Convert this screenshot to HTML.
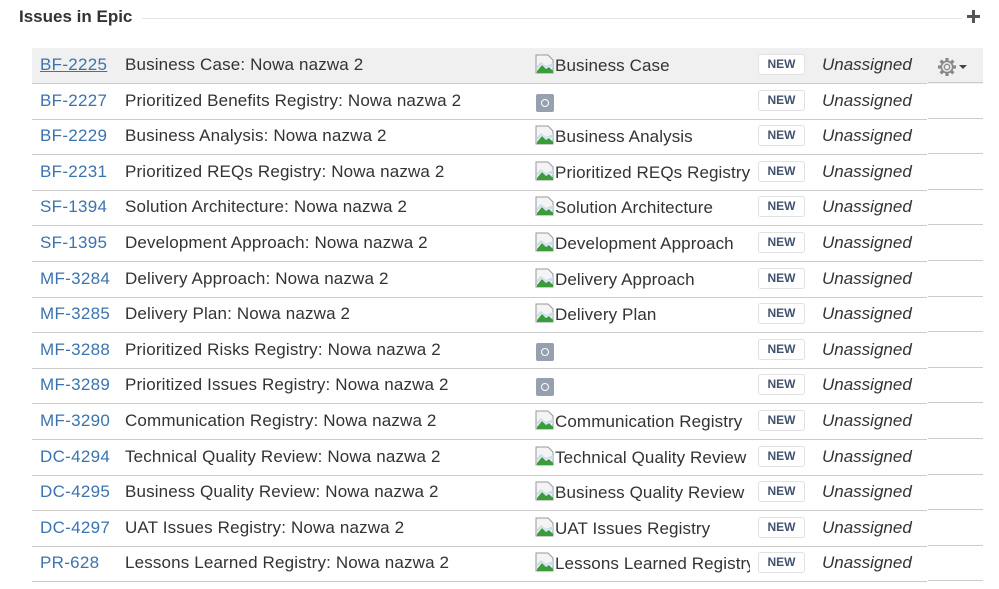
<!DOCTYPE html>
<html><head><meta charset="utf-8"><style>
*{margin:0;padding:0;box-sizing:border-box}
body{width:999px;height:589px;background:#fff;font-family:"Liberation Sans",Arial,sans-serif;color:#333;position:relative;overflow:hidden}
.title{position:absolute;left:19px;top:7px;font-size:17px;font-weight:bold;color:#333}
.hline{position:absolute;left:142px;top:18px;width:820px;height:1px;background:#e5e5e5}
.plus{position:absolute;left:967px;top:10px;width:13px;height:13px}
.plus:before{content:"";position:absolute;left:5px;top:0;width:3px;height:13px;background:#555}
.plus:after{content:"";position:absolute;left:0;top:5px;width:13px;height:3px;background:#555}
.row{position:absolute;left:32px;width:951px;height:36px;font-size:17px;line-height:34px}
.hl{background:#f0f0f0}
.sep{position:absolute;left:0;bottom:0;width:895px;height:1px;background:#ccc}
.sep2{position:absolute;left:896px;bottom:1px;width:55px;height:1px;background:#ccc}
.key{position:absolute;left:8px;top:0;color:#3b73af;letter-spacing:0.3px}
.sum{position:absolute;left:93px;top:0;white-space:nowrap;letter-spacing:0.15px}
.typ{position:absolute;left:503px;width:215px;overflow:hidden;white-space:nowrap;top:1px;letter-spacing:0.1px}
.typ svg{vertical-align:-3px}
.ic{position:absolute;left:504px;top:10px;width:18px;height:18px;background:#97a0af;border-radius:2px}
.ic:after{content:"";position:absolute;left:5px;top:5px;width:8px;height:8px;border:1.6px solid #fff;border-radius:50%;box-sizing:border-box}
.new{position:absolute;left:726px;top:6px;width:47px;height:21px;border:1px solid #dfe1e6;border-radius:3px;background:#fff;font-size:12px;font-weight:bold;color:#42526e;text-align:center;line-height:19px}
.un{position:absolute;left:790px;top:0;font-style:italic;color:#333}
.gear{position:absolute;left:905px;top:7px}
</style></head><body>
<div class="title">Issues in Epic</div>
<div class="hline"></div>
<div class="plus"></div>
<svg width="0" height="0" style="position:absolute"><defs><symbol id="bi" viewBox="0 0 20 20"><path d="M1 1h12l5 5v13H1z" fill="#f4f4f4" stroke="#999"/><path d="M2 12l4-4 5 4 7-3v5l-4-2-3 2-4-4-5 5z" fill="#c8dcef"/><path d="M2 17l5-6 4 4 3-2 4 4v2H2z" fill="#3a9c3a"/></symbol></defs></svg>

<div class="row hl" style="top:48px"><span class="key" style="text-decoration:underline">BF-2225</span><span class="sum">Business Case: Nowa nazwa 2</span><span class="typ"><svg width="20" height="20"><use href="#bi"/></svg>Business Case</span><span class="new">NEW</span><span class="un">Unassigned</span><span class="gear"><svg width="34" height="20" viewBox="0 0 34 20"><g stroke="#888" stroke-width="3.2"><path d="M10 1v18M1 10h18M3.6 3.6l12.8 12.8M16.4 3.6L3.6 16.4"/></g><circle cx="10" cy="10" r="6.5" fill="#888"/><circle cx="10" cy="10" r="5" fill="#e0e0e0"/><circle cx="10" cy="10" r="2.6" fill="#f0f0f0" stroke="#888" stroke-width="1.2"/><path d="M22 8h8l-4 4z" fill="#444"/></svg></span><div class="sep"></div><div class="sep2"></div></div>

<div class="row" style="top:84px"><span class="key">BF-2227</span><span class="sum">Prioritized Benefits Registry: Nowa nazwa 2</span><span class="ic"></span><span class="new">NEW</span><span class="un">Unassigned</span><div class="sep"></div><div class="sep2"></div></div>

<div class="row" style="top:119px"><span class="key">BF-2229</span><span class="sum">Business Analysis: Nowa nazwa 2</span><span class="typ"><svg width="20" height="20"><use href="#bi"/></svg>Business Analysis</span><span class="new">NEW</span><span class="un">Unassigned</span><div class="sep"></div><div class="sep2"></div></div>

<div class="row" style="top:155px"><span class="key">BF-2231</span><span class="sum">Prioritized REQs Registry: Nowa nazwa 2</span><span class="typ"><svg width="20" height="20"><use href="#bi"/></svg>Prioritized REQs Registry</span><span class="new">NEW</span><span class="un">Unassigned</span><div class="sep"></div><div class="sep2"></div></div>

<div class="row" style="top:190px"><span class="key">SF-1394</span><span class="sum">Solution Architecture: Nowa nazwa 2</span><span class="typ"><svg width="20" height="20"><use href="#bi"/></svg>Solution Architecture</span><span class="new">NEW</span><span class="un">Unassigned</span><div class="sep"></div><div class="sep2"></div></div>

<div class="row" style="top:226px"><span class="key">SF-1395</span><span class="sum">Development Approach: Nowa nazwa 2</span><span class="typ"><svg width="20" height="20"><use href="#bi"/></svg>Development Approach</span><span class="new">NEW</span><span class="un">Unassigned</span><div class="sep"></div><div class="sep2"></div></div>

<div class="row" style="top:262px"><span class="key">MF-3284</span><span class="sum">Delivery Approach: Nowa nazwa 2</span><span class="typ"><svg width="20" height="20"><use href="#bi"/></svg>Delivery Approach</span><span class="new">NEW</span><span class="un">Unassigned</span><div class="sep"></div><div class="sep2"></div></div>

<div class="row" style="top:297px"><span class="key">MF-3285</span><span class="sum">Delivery Plan: Nowa nazwa 2</span><span class="typ"><svg width="20" height="20"><use href="#bi"/></svg>Delivery Plan</span><span class="new">NEW</span><span class="un">Unassigned</span><div class="sep"></div><div class="sep2"></div></div>

<div class="row" style="top:333px"><span class="key">MF-3288</span><span class="sum">Prioritized Risks Registry: Nowa nazwa 2</span><span class="ic"></span><span class="new">NEW</span><span class="un">Unassigned</span><div class="sep"></div><div class="sep2"></div></div>

<div class="row" style="top:368px"><span class="key">MF-3289</span><span class="sum">Prioritized Issues Registry: Nowa nazwa 2</span><span class="ic"></span><span class="new">NEW</span><span class="un">Unassigned</span><div class="sep"></div><div class="sep2"></div></div>

<div class="row" style="top:404px"><span class="key">MF-3290</span><span class="sum">Communication Registry: Nowa nazwa 2</span><span class="typ"><svg width="20" height="20"><use href="#bi"/></svg>Communication Registry</span><span class="new">NEW</span><span class="un">Unassigned</span><div class="sep"></div><div class="sep2"></div></div>

<div class="row" style="top:440px"><span class="key">DC-4294</span><span class="sum">Technical Quality Review: Nowa nazwa 2</span><span class="typ"><svg width="20" height="20"><use href="#bi"/></svg>Technical Quality Review</span><span class="new">NEW</span><span class="un">Unassigned</span><div class="sep"></div><div class="sep2"></div></div>

<div class="row" style="top:475px"><span class="key">DC-4295</span><span class="sum">Business Quality Review: Nowa nazwa 2</span><span class="typ"><svg width="20" height="20"><use href="#bi"/></svg>Business Quality Review</span><span class="new">NEW</span><span class="un">Unassigned</span><div class="sep"></div><div class="sep2"></div></div>

<div class="row" style="top:511px"><span class="key">DC-4297</span><span class="sum">UAT Issues Registry: Nowa nazwa 2</span><span class="typ"><svg width="20" height="20"><use href="#bi"/></svg>UAT Issues Registry</span><span class="new">NEW</span><span class="un">Unassigned</span><div class="sep"></div><div class="sep2"></div></div>

<div class="row" style="top:546px"><span class="key">PR-628</span><span class="sum">Lessons Learned Registry: Nowa nazwa 2</span><span class="typ"><svg width="20" height="20"><use href="#bi"/></svg>Lessons Learned Registry</span><span class="new">NEW</span><span class="un">Unassigned</span><div class="sep"></div><div class="sep2"></div></div>
</body></html>
